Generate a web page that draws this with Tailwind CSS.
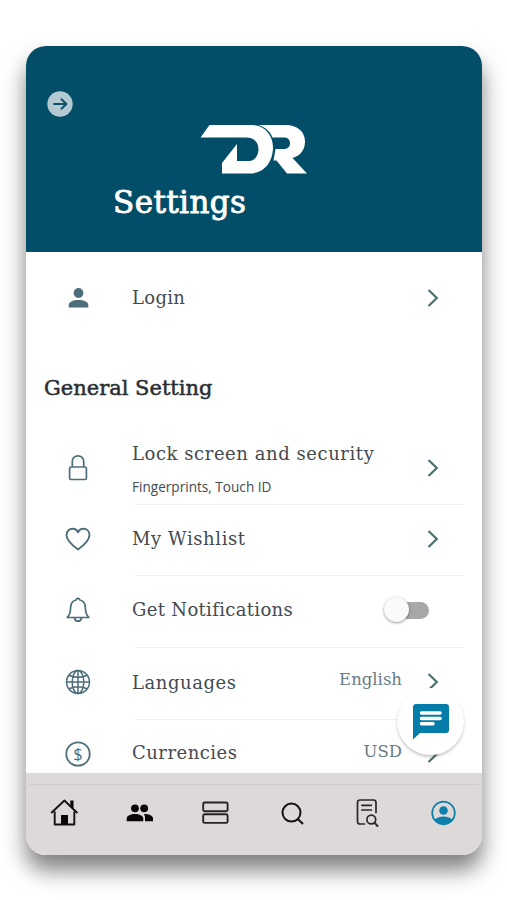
<!DOCTYPE html>
<html lang="en">
<head>
<meta charset="utf-8">
<title>Settings</title>
<script src="https://cdn.jsdelivr.net/npm/@tailwindcss/browser@4"></script>
</head>
<body class="bg-white w-[507px] h-[900px] overflow-hidden pt-[46px] pl-[26px] font-['DejaVu_Serif','Liberation_Serif',serif] text-[#444a4e]">
<svg class="hidden">
  <symbol id="chev" viewBox="0 0 12 20"><path d="M1.500 2 9.800 10 1.500 18" fill="none" stroke="#4a6f74" stroke-width="2.200"/></symbol>
</svg>
<main class="relative flex flex-col w-[456px] h-[809px] rounded-[20px] bg-white shadow-[0_15px_22px_rgba(0,0,0,0.5)]">
  <header class="h-[206px] shrink-0 bg-[#024d67] rounded-t-[20px] pt-[45px]">
    <svg class="ml-[21px] block" width="26" height="26" viewBox="0 0 26 26"><circle cx="13" cy="13" r="12.700" fill="#b3cad3"/><path d="M6.300 13H19M14 7.700l5.400 5.300-5.400 5.300" fill="none" stroke="#0b4f68" stroke-width="1.900"/></svg>
    <svg class="block ml-[174px] mt-[8px]" width="108" height="50" viewBox="0 0 108 50" fill="#fff">
      <path d="M9.500 0H53C67 1 73.500 13 73 24 72 38 64 48.500 49 48.500H22V38L37 19V36H49C55 36 58.500 30 58.500 24.500 58.500 17 54 12.500 46 12.500H0.500Z"/>
      <path d="M58 0H85C98 0 105 7 105 16.500 105 25 100 31 92.500 33L107 48.500H87L76.500 35.500H73.500L75.500 24H84C88 24 90 21.500 90 18 90 14.500 87.500 12.500 84 12.500H72.500C70 6 65 2 58 0Z"/>
    </svg>
    <h1 class="ml-[87px] mt-[8px] text-white text-[31px] leading-[38px] tracking-[0.4px] [-webkit-text-stroke:0.9px_white]">Settings</h1>
  </header>

  <section class="h-[521px] shrink-0 overflow-hidden">
    <div class="flex items-center h-[92px] pl-[42px] pr-[43px]">
      <svg width="21" height="20" viewBox="0 0 21 20" fill="#4c6d7a"><circle cx="10.500" cy="5" r="4.900"/><path d="M.7 19.500V17C.7 14 5 12 10.500 12s9.800 2 9.800 5v2.500Z"/></svg>
      <span class="ml-[43px] -mt-[2px] text-[18px] tracking-[0.3px]">Login</span>
      <svg class="ml-auto" width="12" height="20"><use href="#chev"/></svg>
    </div>
    <h2 class="h-[88px] pt-[29px] pl-[18px] text-[21px] leading-[30px] text-[#282e33] [-webkit-text-stroke:0.5px_#282e33]">General Setting</h2>
    <div class="flex items-center h-[72px] pl-[38px] pr-[43px] pb-px">
      <svg width="28" height="28" viewBox="0 0 28 28" fill="none" stroke="#4c6d7a" stroke-width="1.700"><rect x="5.600" y="13" width="16.800" height="12.500" rx="1.500"/><path d="M8.300 13V7.500a5.700 5.700 0 0 1 11.400 0V13"/></svg>
      <div class="ml-[40px] flex flex-col pt-[4px]">
        <span class="text-[18px] leading-[24px] tracking-[0.560px]">Lock screen and security</span>
        <span class="mt-[11px] font-['Open_Sans','Noto_Sans',sans-serif] text-[13.600px] leading-[20px]">Fingerprints, Touch ID</span>
      </div>
      <svg class="ml-auto" width="12" height="20"><use href="#chev"/></svg>
    </div>
    <div class="ml-[109px] mr-[18px] h-px bg-[#f0f1f2]"></div>
    <div class="flex items-center h-[70px] pl-[38px] pr-[43px] pb-[3px]">
      <svg width="28" height="28" viewBox="0 0 28 28" fill="none" stroke="#4c6d7a" stroke-width="1.900" stroke-linejoin="round"><path d="M14 24.500C10 21.500 2.500 16 2.500 10.200 2.500 6.300 5.200 3.800 8.700 3.800c2.400 0 4.300 1.300 5.300 3.500 1-2.200 2.900-3.500 5.300-3.500 3.500 0 6.200 2.500 6.200 6.400C25.500 16 18 21.500 14 24.500Z"/></svg>
      <span class="ml-[40px] -mt-px text-[18px] tracking-[0.600px]">My Wishlist</span>
      <svg class="ml-auto" width="12" height="20"><use href="#chev"/></svg>
    </div>
    <div class="ml-[109px] mr-[18px] h-px bg-[#f0f1f2]"></div>
    <div class="flex items-center h-[71px] pl-[38px] pr-[53px] pb-[3px]">
      <svg width="28" height="28" viewBox="0 0 28 28" fill="none" stroke="#4c6d7a" stroke-width="1.700" stroke-linejoin="round"><path d="M3.200 21.500C6.500 18.500 6.500 15 6.600 12 6.700 7 9.500 4.500 12.200 4 12.500 1.800 15.500 1.800 15.800 4c2.700.5 5.500 3 5.600 8 .1 3 .1 6.500 3.400 9.500ZM10.500 22a3.600 4.200 0 0 0 7 0"/></svg>
      <span class="ml-[40px] -mt-px text-[18px] tracking-[0.330px]">Get Notifications</span>
      <div class="ml-auto relative w-[45px] h-[28px]">
        <div class="absolute left-[8px] top-[6px] w-[37px] h-[17px] rounded-full bg-[#a8a8a8]"></div>
        <div class="absolute left-0 top-[1px] size-[25px] rounded-full bg-[#fafafa] shadow-[0_1px_3px_rgba(0,0,0,0.4)]"></div>
      </div>
    </div>
    <div class="ml-[109px] mr-[18px] h-px bg-[#f0f1f2]"></div>
    <div class="flex items-center h-[71px] pl-[38px] pr-[43px] pb-[3px]">
      <svg width="28" height="28" viewBox="0 0 28 28" fill="none" stroke="#4c6d7a" stroke-width="1.500"><circle cx="14" cy="14" r="11.500"/><ellipse cx="14" cy="14" rx="5.800" ry="11.500"/><path d="M14 2.500v23M2.500 14h23M5 7.200Q14 11.500 23 7.200M5 20.800Q14 16.500 23 20.800"/></svg>
      <span class="ml-[40px] text-[18px] tracking-[0.550px]">Languages</span>
      <span class="ml-auto -mt-[3px] text-[16.500px] text-[#6a7b85]">English</span>
      <svg class="ml-[25px]" width="12" height="20"><use href="#chev"/></svg>
    </div>
    <div class="ml-[109px] mr-[18px] h-px bg-[#f0f1f2]"></div>
    <div class="flex items-center h-[68px] pl-[38px] pr-[43px]">
      <svg width="28" height="28" viewBox="0 0 28 28"><circle cx="14" cy="14" r="11.700" fill="none" stroke="#4c6d7a" stroke-width="1.800"/><text x="14" y="19.800" text-anchor="middle" font-family="Open Sans" font-size="16.500" font-weight="500" fill="#4c6d7a">$</text></svg>
      <span class="ml-[40px] -mt-[3px] text-[18px] tracking-[0.480px]">Currencies</span>
      <span class="ml-auto -mt-[4px] text-[16.500px] text-[#6a7b85]">USD</span>
      <svg class="ml-[25px]" width="12" height="20"><use href="#chev"/></svg>
    </div>
  </section>

  <button aria-label="Chat" class="absolute left-[371px] top-[642px] size-[67px] rounded-full bg-white shadow-[0_2px_3px_rgba(0,0,0,0.22)] flex justify-center pt-[16px]">
    <svg width="36" height="36" viewBox="0 0 36 36"><path d="M3 0H33Q36 0 36 3V26Q36 29 33 29H7L0 35.500V3Q0 0 3 0Z" fill="#047caa"/><path d="M8.500 9h18.500M8.500 14.500h18.500M8.500 19.800h11.500" stroke="#fff" stroke-width="3.600" stroke-linecap="round"/></svg>
  </button>

  <nav class="h-[82px] shrink-0 bg-[#ded9d9] rounded-b-[20px] pt-[11px]">
    <div class="h-px bg-[#d1cccc] mx-[3px]"></div>
    <div class="flex justify-between items-center px-[24px] pt-[13px]">
      <svg width="28" height="30" viewBox="0 0 28 30"><path d="M4.700 13.500V26.500h19.600V13.500M1.200 15 14.400 2.500 27.400 15" fill="none" stroke="#161212" stroke-width="1.900" stroke-linejoin="round"/><path d="M20.300 2.500h3.200v8.500l-3.200-3ZM11 17h7v9.500h-7Z" fill="#090707"/></svg>
      <svg viewBox="1 0 28 30" width="28" height="30" fill="#080606"><circle cx="10" cy="10.300" r="3.900"/><circle cx="19.200" cy="10.300" r="3.900"/><path d="M1.700 23.200V20.500C1.700 17.500 6 16 10 16s8.300 1.500 8.300 4.500v2.700ZM20 23.200h8v-3C28 17.500 23.500 16 18.700 16 20 17.500 20.200 19 20 23.200Z"/></svg>
      <svg width="28" height="30" viewBox="0.800 -0.500 28 30" fill="none" stroke="#292323" stroke-width="1.900"><rect x="2" y="4" width="24.400" height="8.700" rx="1.500"/><rect x="2" y="15.700" width="24.400" height="8.700" rx="1.500"/></svg>
      <svg width="28" height="30" viewBox="-0.500 -0.800 28 30" fill="none" stroke="#151111" stroke-width="2"><circle cx="13" cy="13.800" r="9"/><path d="M19.500 20.500 24.500 25.200"/></svg>
      <svg width="28" height="30" viewBox="1 0 28 30" fill="none" stroke="#2c2626" stroke-width="1.700" stroke-linecap="round"><path d="M11.500 26H7Q4.500 26 4.500 23.500V4.500Q4.500 2 7 2H20.500Q23 2 23 4.500V14.500M8.800 7.300h9.600M8.800 12h9.600"/><circle cx="18.300" cy="21.500" r="4.400"/><path d="M21.600 24.800 24.500 28" stroke-width="2"/></svg>
      <svg width="28" height="30" viewBox="0 0 28 30"><circle cx="13.500" cy="15" r="11.300" fill="none" stroke="#0d7fab" stroke-width="1.700"/><circle cx="13.500" cy="12.500" r="4.300" fill="#0d7fab"/><path d="M4.800 21.500C9 17.500 18 17.500 22.200 21.500 18 28 9 28 4.800 21.500Z" fill="#0d7fab"/></svg>
    </div>
  </nav>
</main>
</body>
</html>
